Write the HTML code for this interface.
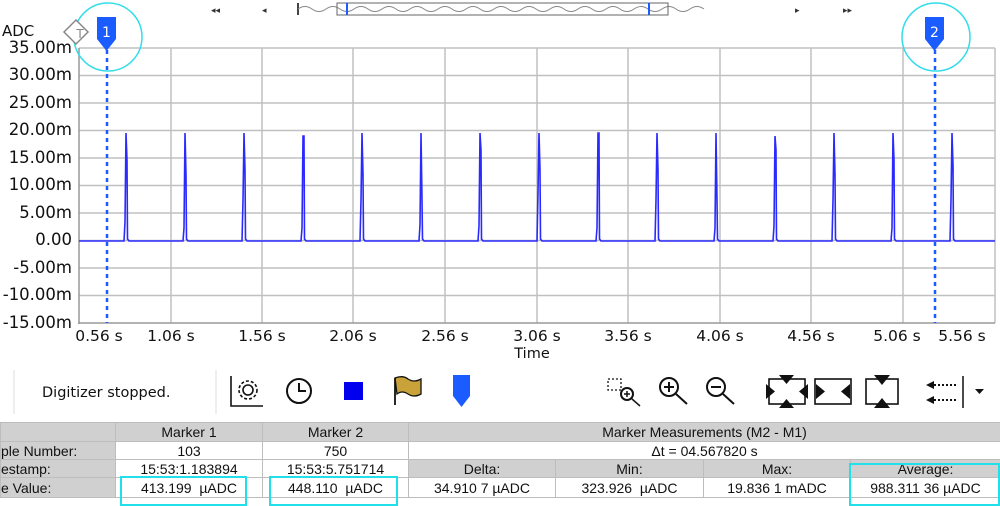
<!DOCTYPE html>
<html><head><meta charset="utf-8">
<style>
html,body{margin:0;padding:0;background:#fff;}
body{width:1000px;height:506px;overflow:hidden;position:relative;font-family:"DejaVu Sans","Liberation Sans",sans-serif;}
table{position:absolute;left:0;top:422px;width:1000px;border-collapse:collapse;font-family:"Liberation Sans",sans-serif;font-size:14px;color:#111;table-layout:fixed;}
td{border:1px solid #bdbdbd;height:17px;padding:0;text-align:center;white-space:nowrap;overflow:hidden;}
.g{background:#d0d0d0;}
.w{background:#fff;}
</style></head><body>
<svg width="1000" height="506" style="position:absolute;left:0;top:0" font-family="DejaVu Sans, sans-serif">
<text x="211" y="13" font-size="9" fill="#333">◂◂</text>
<text x="262" y="13" font-size="9" fill="#333">◂</text>
<text x="795" y="13" font-size="9" fill="#333">▸</text>
<text x="843" y="13" font-size="9" fill="#333">▸▸</text>
<line x1="298" y1="3" x2="298" y2="15" stroke="#444" stroke-width="2"/>
<path d="M298 9 Q305 4 312 9 T326 9 T340 9 T354 9 T368 9 T382 9 T396 9 T410 9 T424 9 T438 9 T452 9 T466 9 T480 9 T494 9 T508 9 T522 9 T536 9 T550 9 T564 9 T578 9 T592 9 T606 9 T620 9 T634 9 T648 9 T662 9 T676 9 T690 9 T704 9" fill="none" stroke="#888" stroke-width="1"/>
<rect x="337" y="3" width="331" height="12" fill="none" stroke="#666" stroke-width="1"/>
<line x1="347" y1="3" x2="347" y2="15" stroke="#1a5cff" stroke-width="2"/>
<line x1="649" y1="3" x2="649" y2="15" stroke="#1a5cff" stroke-width="2"/>
<g stroke="#c0c0c0" stroke-width="1.5">
<line x1="79" y1="48" x2="995" y2="48"/><line x1="79" y1="75.5" x2="995" y2="75.5"/><line x1="79" y1="103" x2="995" y2="103"/><line x1="79" y1="130.5" x2="995" y2="130.5"/><line x1="79" y1="158" x2="995" y2="158"/><line x1="79" y1="185.5" x2="995" y2="185.5"/><line x1="79" y1="213" x2="995" y2="213"/><line x1="79" y1="240.5" x2="995" y2="240.5"/><line x1="79" y1="268" x2="995" y2="268"/><line x1="79" y1="295.5" x2="995" y2="295.5"/>
<line x1="171" y1="48" x2="171" y2="323"/><line x1="262" y1="48" x2="262" y2="323"/><line x1="353" y1="48" x2="353" y2="323"/><line x1="445" y1="48" x2="445" y2="323"/><line x1="537" y1="48" x2="537" y2="323"/><line x1="628" y1="48" x2="628" y2="323"/><line x1="720" y1="48" x2="720" y2="323"/><line x1="811" y1="48" x2="811" y2="323"/><line x1="903" y1="48" x2="903" y2="323"/><line x1="995" y1="48" x2="995" y2="323"/>
</g>
<line x1="79" y1="48" x2="79" y2="324" stroke="#999" stroke-width="1.5"/>
<line x1="78" y1="323" x2="995" y2="323" stroke="#999" stroke-width="1.5"/>
<g font-size="16.5" fill="#111" text-anchor="end">
<text x="72" y="53">35.00m</text><text x="72" y="80">30.00m</text><text x="72" y="108">25.00m</text><text x="72" y="135">20.00m</text><text x="72" y="163">15.00m</text><text x="72" y="190">10.00m</text><text x="72" y="218">5.00m</text><text x="72" y="245">0.00</text><text x="72" y="273">-5.00m</text><text x="72" y="300">-10.00m</text><text x="72" y="328">-15.00m</text>
</g>
<text x="2" y="36" font-size="15" fill="#111">ADC</text>
<g font-size="15.5" fill="#111" text-anchor="middle">
<text x="99" y="341">0.56 s</text><text x="171" y="341">1.06 s</text><text x="262" y="341">1.56 s</text><text x="353" y="341">2.06 s</text><text x="445" y="341">2.56 s</text><text x="537" y="341">3.06 s</text><text x="628" y="341">3.56 s</text><text x="720" y="341">4.06 s</text><text x="811" y="341">4.56 s</text><text x="897" y="341">5.06 s</text><text x="962" y="341">5.56 s</text>
</g>
<text x="532" y="358" font-size="14.5" fill="#111" text-anchor="middle">Time</text>
<path fill="none" stroke="#2a2aff" stroke-width="1.6" d="M79 241 L124 241 L125 222 L126 133 L127 160 L127.5 239 L129 241
L183 241 L184 228 L185 133 L186 175 L186.5 239 L188 241
L242 241 L243 200 L244 133 L245 170 L245.5 239 L247 241
L301 241 L302 228 L303 136 L304 136 L304.5 239 L306 241
L360 241 L361 200 L362 133 L363 175 L363.5 239 L365 241
L419 241 L420 225 L421 133 L422 200 L422.5 239 L424 241
L478 241 L479 226 L480 133 L481 150 L481.5 239 L483 241
L537 241 L538 193 L539 133 L540 170 L540.5 239 L542 241
L596 241 L597 228 L598 133 L599 133 L599.5 239 L601 241
L655 241 L656 200 L657 133 L658 170 L658.5 239 L660 241
L714 241 L715 228 L716 133 L717 200 L717.5 239 L719 241
L773 241 L774 226 L775 136 L776 150 L776.5 239 L778 241
L832 241 L833 200 L834 133 L835 175 L835.5 239 L837 241
L891 241 L892 228 L893 133 L894 160 L894.5 239 L896 241
L950 241 L951 200 L952 133 L953 165 L953.5 239 L955 241 L995 241"/>
<line x1="107" y1="50" x2="107" y2="323" stroke="#1a5cff" stroke-width="2.5" stroke-dasharray="4,4"/>
<line x1="935" y1="50" x2="935" y2="323" stroke="#1a5cff" stroke-width="2.5" stroke-dasharray="4,4"/>
<path d="M97 17 h19 v22 l-9.5 12 l-9.5-12z" fill="#1a5cff"/>
<text x="106.5" y="37" font-size="14" fill="#fff" text-anchor="middle">1</text>
<path d="M925 17 h19 v22 l-9.5 12 l-9.5-12z" fill="#1a5cff"/>
<text x="934.5" y="37" font-size="14" fill="#fff" text-anchor="middle">2</text>
<circle cx="108" cy="37" r="34" fill="none" stroke="#33dde8" stroke-width="1.5"/>
<circle cx="936" cy="37" r="34" fill="none" stroke="#33dde8" stroke-width="1.5"/>
<path d="M76 20 L88 32 L76 44 L64 32Z" fill="#fff" stroke="#888" stroke-width="1.5"/>
<text x="80" y="38" font-size="12" fill="#888" text-anchor="middle">T</text>
<line x1="14" y1="370" x2="14" y2="414" stroke="#ddd"/>
<line x1="216" y1="370" x2="216" y2="414" stroke="#ddd"/>
<text x="42" y="397" font-size="14.5" fill="#111">Digitizer stopped.</text>
<g stroke="#111" stroke-width="1.6" fill="none">
<path d="M231 376 V406 H263"/><circle cx="248" cy="390" r="5"/><circle cx="248" cy="390" r="9" stroke-dasharray="3,2"/>
<circle cx="299" cy="391" r="12" stroke-width="2"/><path d="M299 383 V391 H306" stroke-width="2"/>
</g>
<rect x="344" y="382" width="19" height="18" fill="#0000ee"/>
<path d="M395 378 Q403 375 408 379 Q414 383 421 379 V394 Q414 398 408 394 Q402 390 397 394 Z" fill="#c9a33a" stroke="#111" stroke-width="1.3"/>
<line x1="395" y1="378" x2="395" y2="405" stroke="#111" stroke-width="1.8"/>
<path d="M453 375 h17 v21 l-8.5 11 l-8.5-11z" fill="#1a5cff"/>
<g stroke="#111" stroke-width="2" fill="none">
<rect x="608" y="379" width="13" height="11" stroke-dasharray="2,2" stroke-width="1.3"/><circle cx="627" cy="394" r="6"/><path d="M632 399 L640 406 M624 394 h6 M627 391 v6" stroke-width="1.5"/>
<circle cx="669" cy="387" r="9"/><path d="M676 394 L687 404 M664 387 h10 M669 382 v10"/>
<circle cx="716" cy="387" r="9"/><path d="M723 394 L734 404 M711 387 h10"/>
<rect x="769" y="379" width="36" height="25" stroke-width="1.6"/>
<rect x="815" y="379" width="36" height="25" stroke-width="1.6"/>
<rect x="866" y="379" width="32" height="25" stroke-width="1.6"/>
<path d="M963 376 V408" stroke-width="1.5"/>
<path d="M934 385 H958 M934 400 H958" stroke-dasharray="2,2" stroke-width="2"/>
</g>
<g fill="#111">
<path d="M779 375 h15 l-7.5 9z M779 408 h15 l-7.5-9z M766 384 v15 l9-7.5z M808 384 v15 l-9-7.5z"/>
<path d="M816 384 v15 l9-7.5z M850 384 v15 l-9-7.5z"/>
<path d="M874 375 h16 l-8 10z M874 408 h16 l-8-10z"/>
<path d="M926 385 l8-4 v8z M926 400 l8-4 v8z"/>
<path d="M975 389 h9 l-4.5 5z"/>
</g>
</svg>
<table>
<colgroup><col style="width:115px"><col style="width:147px"><col style="width:146px"><col style="width:147px"><col style="width:148px"><col style="width:147px"><col style="width:150px"></colgroup>
<tr style="height:19px"><td class="g"></td><td class="g">Marker 1</td><td class="g">Marker 2</td><td class="g" colspan="4">Marker Measurements (M2 - M1)</td></tr>
<tr style="height:18px"><td class="g" style="text-align:left">ple Number:</td><td class="w">103</td><td class="w">750</td><td class="w" colspan="4">Δt = 04.567820 s</td></tr>
<tr style="height:16px"><td class="g" style="text-align:left">estamp:</td><td class="w">15:53:1.183894</td><td class="w">15:53:5.751714</td><td class="g">Delta:</td><td class="g">Min:</td><td class="g">Max:</td><td class="g">Average:</td></tr>
<tr style="height:20px"><td class="g" style="text-align:left">e Value:</td><td class="w">413.199&nbsp; µADC</td><td class="w">448.110&nbsp; µADC</td><td class="w">34.910 7 µADC</td><td class="w">323.926&nbsp; µADC</td><td class="w">19.836 1 mADC</td><td class="w">988.311 36 µADC</td></tr>
</table>
<div style="position:absolute;left:120px;top:476px;width:123px;height:26px;border:2px solid #22e0ea"></div>
<div style="position:absolute;left:269px;top:476px;width:125px;height:26px;border:2px solid #22e0ea"></div>
<div style="position:absolute;left:849px;top:463px;width:147px;height:39px;border:2px solid #22e0ea"></div>
</body></html>
